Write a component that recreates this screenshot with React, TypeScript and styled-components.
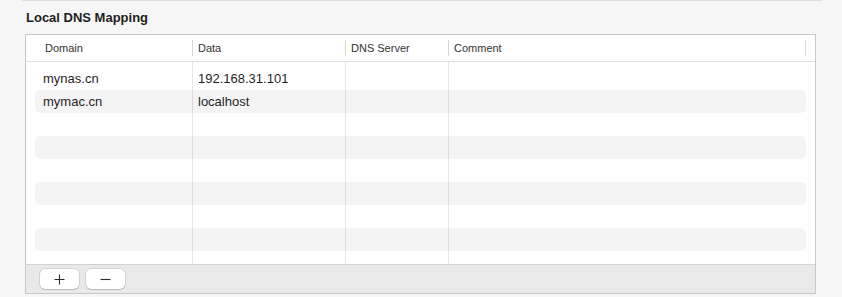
import React from "react";
import styled, { createGlobalStyle } from "styled-components";

const GlobalStyle = createGlobalStyle`
  html, body {
    margin: 0;
    padding: 0;
    background: #f6f6f6;
  }
  body {
    font-family: "Liberation Sans", Arial, sans-serif;
    color: #222;
  }
`;

const Page = styled.div`
  width: 842px;
  height: 297px;
  overflow: hidden;
  background: #f6f6f6;
`;

// bottom edge of the panel that sits above this one
const PrevPanel = styled.div`
  height: 8px;
  margin: -8px 15px 0 17px;
  border: 1px solid #dcdcdc;
  border-top: none;
  border-radius: 0 0 8px 8px;
  background: #f4f4f4;
`;

const Title = styled.h3`
  margin: 9px 0 8px 26px;
  font-size: 13px;
  line-height: 16px;
  font-weight: 700;
  color: #1e1e1e;
`;

const Table = styled.div`
  box-sizing: border-box;
  width: 791px;
  margin-left: 25px;
  border: 1px solid #c8c8c8;
  background: #fff;
  display: flex;
  flex-direction: column;
`;

const cols = "157px 153px 103px 1fr";

const HeaderRow = styled.div`
  display: grid;
  grid-template-columns: 166px 153px 103px 357px 1fr;
  height: 26px;
  border-bottom: 1px solid #e2e2e2;
`;

const HeaderCell = styled.div<{ $first?: boolean }>`
  position: relative;
  padding-left: ${(p) => (p.$first ? "19px" : "6px")};
  font-size: 11px;
  line-height: 26px;
  color: #333;
  white-space: nowrap;

  &::before {
    content: "";
    display: ${(p) => (p.$first ? "none" : "block")};
    position: absolute;
    left: 0;
    top: 5px;
    height: 16px;
    width: 1px;
    background: #d6d6d6;
  }
`;

const Body = styled.div`
  height: 202px;
  overflow: hidden;
  box-sizing: border-box;
  padding: 5px 9px 0;
  background:
    linear-gradient(#e4e4e4, #e4e4e4) 166px 0 / 1px 100% no-repeat,
    linear-gradient(#e4e4e4, #e4e4e4) 319px 0 / 1px 100% no-repeat,
    linear-gradient(#e4e4e4, #e4e4e4) 422px 0 / 1px 100% no-repeat,
    #fff;
`;

const Row = styled.div<{ $striped: boolean }>`
  display: grid;
  grid-template-columns: ${cols};
  height: 23px;
  border-radius: 5px;
  background: ${(p) => (p.$striped ? "rgba(0, 0, 0, 0.045)" : "transparent")};
`;

const Cell = styled.div<{ $first?: boolean }>`
  padding-left: ${(p) => (p.$first ? "8px" : "6px")};
  font-size: 13px;
  line-height: 23px;
  color: #1f1f1f;
  white-space: nowrap;
  overflow: hidden;
`;

const Footer = styled.div`
  display: flex;
  align-items: center;
  gap: 7px;
  height: 28px;
  padding-left: 14px;
  border-top: 1px solid #d2d2d2;
  background: #e9e9e9;
`;

const ToolButton = styled.button`
  display: flex;
  align-items: center;
  justify-content: center;
  width: 39px;
  height: 20px;
  padding: 0;
  border: none;
  border-radius: 5px;
  background: #fff;
  box-shadow: 0 0 0 0.5px rgba(0, 0, 0, 0.18), 0 1px 1px rgba(0, 0, 0, 0.12);
  color: #2a2a2a;
  cursor: pointer;
`;

const entries = [
  { domain: "mynas.cn", data: "192.168.31.101", server: "", comment: "" },
  { domain: "mymac.cn", data: "localhost", server: "", comment: "" },
];

const ROW_COUNT = 9;

export default function App() {
  const rows = Array.from({ length: ROW_COUNT }, (_, i) => entries[i]);

  return (
    <Page>
      <GlobalStyle />
      <PrevPanel />
      <Title>Local DNS Mapping</Title>
      <Table>
        <HeaderRow>
          <HeaderCell $first>Domain</HeaderCell>
          <HeaderCell>Data</HeaderCell>
          <HeaderCell>DNS Server</HeaderCell>
          <HeaderCell>Comment</HeaderCell>
          <HeaderCell />
        </HeaderRow>
        <Body>
          {rows.map((entry, i) => (
            <Row key={i} $striped={i % 2 === 1}>
              <Cell $first>{entry?.domain}</Cell>
              <Cell>{entry?.data}</Cell>
              <Cell>{entry?.server}</Cell>
              <Cell>{entry?.comment}</Cell>
            </Row>
          ))}
        </Body>
        <Footer>
          <ToolButton aria-label="Add">
            <svg width="11" height="11" viewBox="0 0 11 11">
              <path d="M5.5 0.5v10M0.5 5.5h10" stroke="currentColor" strokeWidth="1.1" />
            </svg>
          </ToolButton>
          <ToolButton aria-label="Remove">
            <svg width="11" height="11" viewBox="0 0 11 11">
              <path d="M0.5 5.5h10" stroke="currentColor" strokeWidth="1.1" />
            </svg>
          </ToolButton>
        </Footer>
      </Table>
    </Page>
  );
}
